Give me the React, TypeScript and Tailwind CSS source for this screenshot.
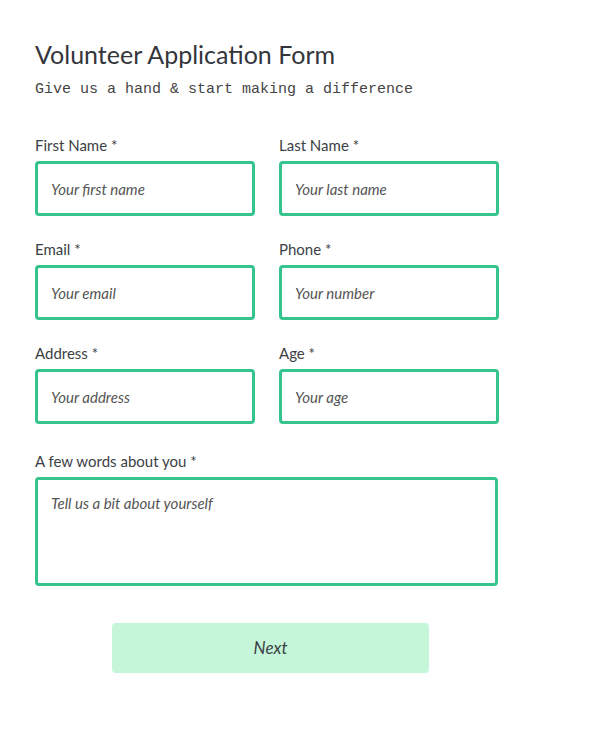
import { useState } from "react";

const fields = [
  { name: "firstName", label: "First Name", placeholder: "Your first name" },
  { name: "lastName", label: "Last Name", placeholder: "Your last name" },
  { name: "email", label: "Email", placeholder: "Your email" },
  { name: "phone", label: "Phone", placeholder: "Your number" },
  { name: "address", label: "Address", placeholder: "Your address" },
  { name: "age", label: "Age", placeholder: "Your age" },
];

const App = () => {
  const [values, setValues] = useState<Record<string, string>>({});

  const update = (name: string, v: string) =>
    setValues((prev) => ({ ...prev, [name]: v }));

  return (
    <div className="min-h-screen bg-white pl-[35px] pt-[38px] text-[#3b3f45] font-['Lato',sans-serif]">
      {/* Header */}
      <h1 className="text-[25px] leading-[32px] text-[#33363b]">Volunteer Application Form</h1>
      <p className="mt-[11px] text-[15px] leading-[18px] text-[#444] font-['Liberation_Mono',monospace]">
        Give us a hand &amp; start making a difference
      </p>

      {/* Fields */}
      <div className="mt-[37px] grid w-[464px] grid-cols-[220px_220px] gap-x-[24px] gap-y-[24px]">
        {fields.map((f) => (
          <div key={f.name}>
            <label className="block text-[15px] leading-[18px] mb-[7px]">{f.label} *</label>
            <input
              value={values[f.name] || ""}
              onChange={(e) => update(f.name, e.target.value)}
              placeholder={f.placeholder}
              className="h-[55px] w-full rounded-[4px] border-[3px] border-[#34c48c] px-[13px] text-[15px] italic outline-none placeholder:text-[#555]"
            />
          </div>
        ))}
      </div>

      <div className="mt-[28px] w-[464px]">
        <label className="block text-[15px] leading-[18px] mb-[7px]">A few words about you *</label>
        <textarea
          value={values.about || ""}
          onChange={(e) => update("about", e.target.value)}
          placeholder="Tell us a bit about yourself"
          className="block h-[109px] w-[463px] resize-none rounded-[4px] border-[3px] border-[#34c48c] px-[13px] pt-[12px] text-[15px] italic outline-none placeholder:text-[#555]"
        />
      </div>

      <button className="mt-[37px] ml-[77px] h-[50px] w-[317px] rounded-[4px] bg-[#c6f6d9] text-[17px] italic text-[#3b3f45]">
        Next
      </button>
    </div>
  );
};

export default App;
